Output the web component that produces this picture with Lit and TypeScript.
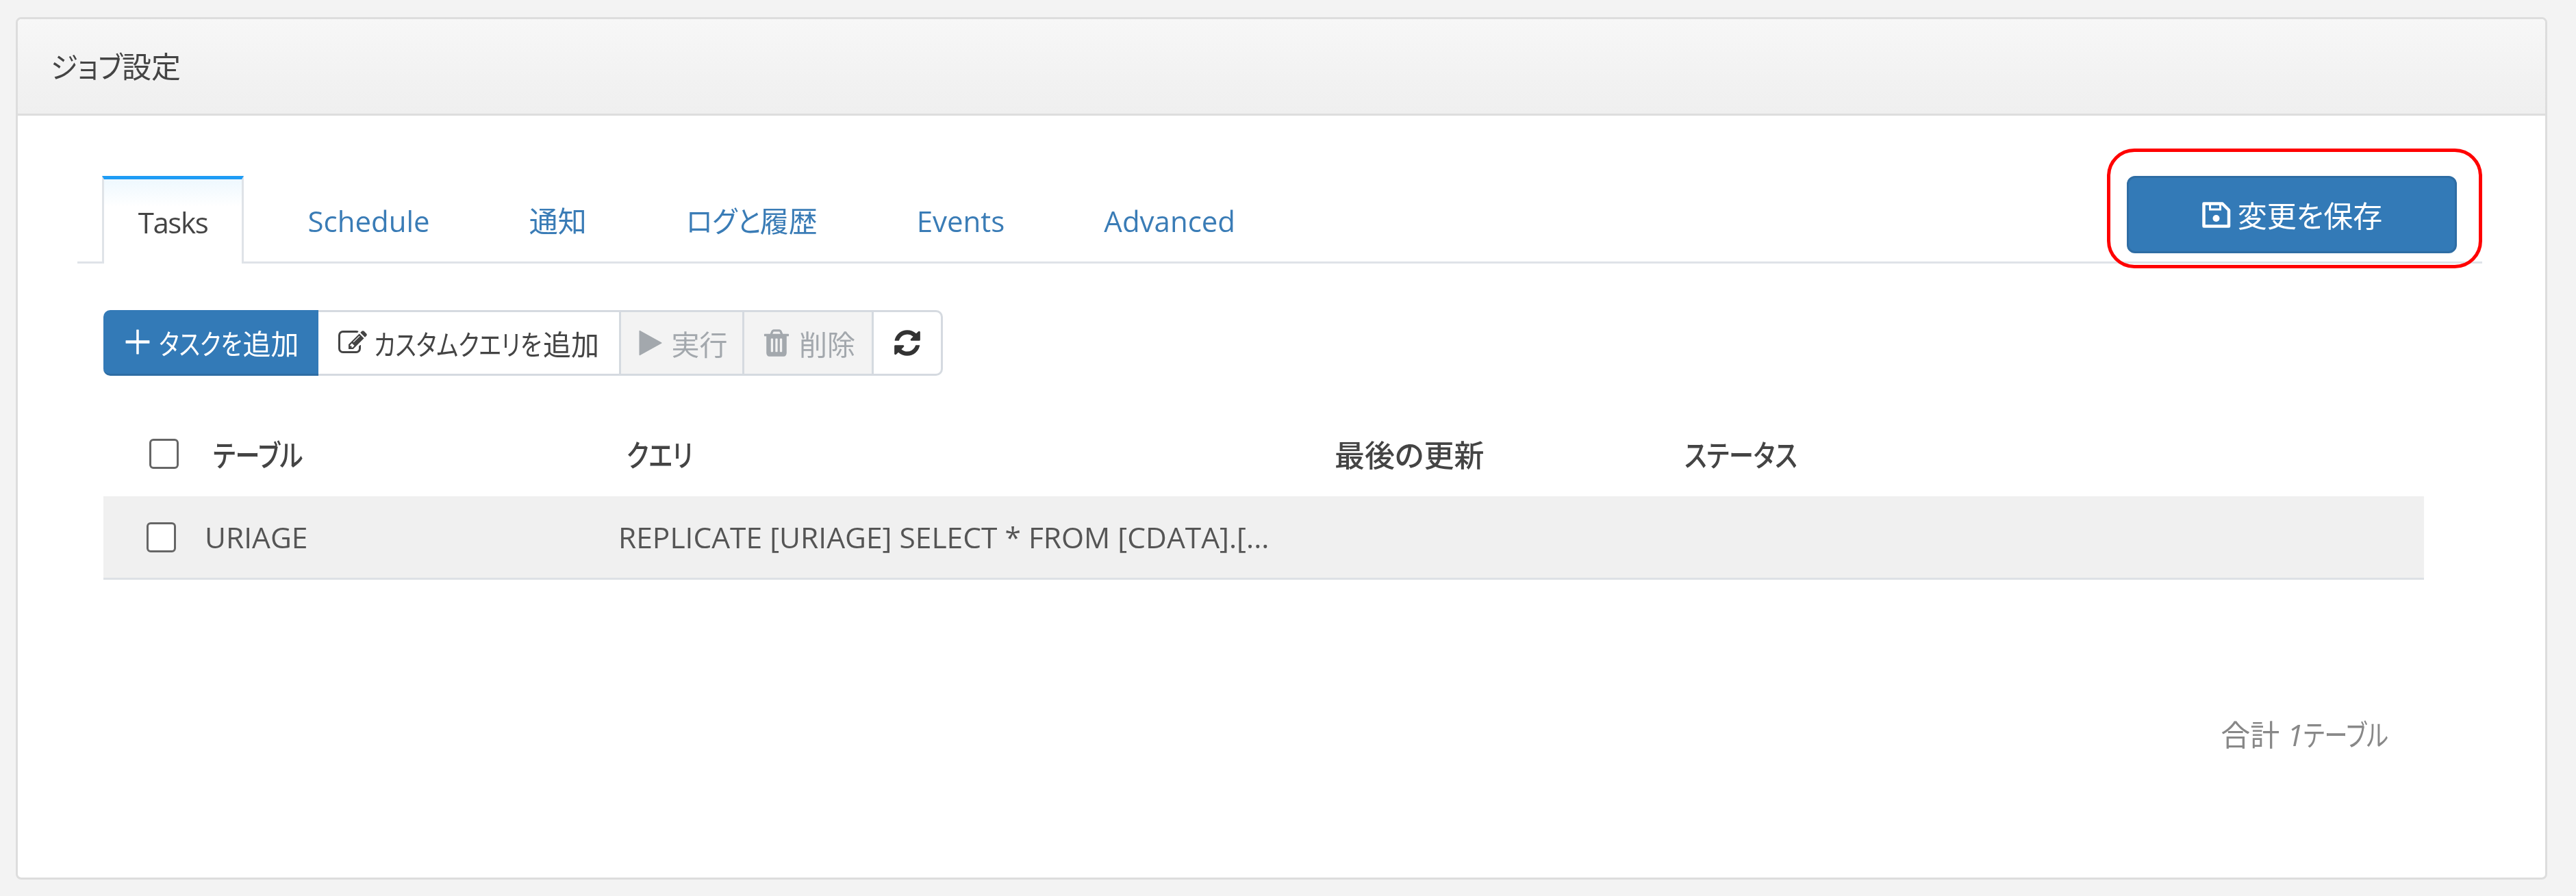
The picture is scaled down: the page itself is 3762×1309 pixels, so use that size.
import { LitElement, html, css } from "lit";
import { customElement } from "lit/decorators.js";

const icon = (d: string, cls = "") => html`<svg class="ic ${cls}" viewBox="0 0 1792 1792" fill="currentColor"><path d=${d}></path></svg>`;
const P = {
  plus: "M1640 800v150q0 20-20 20H970v650q0 20-20 20H840q-20 0-20-20V970H170q-20 0-20-20V800q0-20 20-20h650V130q0-20 20-20h110q20 0 20 20v650h650q20 0 20 20z",
  edit: "M888 1184l116-116-152-152-116 116v56h96v96h56zm440-720q-16-16-33 1l-350 350q-17 17-1 33t33-1l350-350q17-17 1-33zm80 594v190q0 119-84.5 203.5t-203.5 84.5h-832q-119 0-203.5-84.5t-84.5-203.5v-832q0-119 84.5-203.5t203.5-84.5h832q63 0 117 25 15 7 18 23 3 17-9 29l-49 49q-14 14-32 8-23-6-45-6h-832q-66 0-113 47t-47 113v832q0 66 47 113t113 47h832q66 0 113-47t47-113v-126q0-13 9-22l64-64q15-15 35-7t20 29zm-96-738l288 288-672 672h-288v-288zm444 132l-92 92-288-288 92-92q28-28 68-28t68 28l152 152q28 28 28 68t-28 68z",
  play: "M1576 927l-1328 738q-23 13-39.5 3t-16.5-36v-1472q0-26 16.5-36t39.5 3l1328 738q23 13 23 31t-23 31z",
  trash: "M704 1376v-704q0-14-9-23t-23-9h-64q-14 0-23 9t-9 23v704q0 14 9 23t23 9h64q14 0 23-9t9-23zm256 0v-704q0-14-9-23t-23-9h-64q-14 0-23 9t-9 23v704q0 14 9 23t23 9h64q14 0 23-9t9-23zm256 0v-704q0-14-9-23t-23-9h-64q-14 0-23 9t-9 23v704q0 14 9 23t23 9h64q14 0 23-9t9-23zm-544-992h448l-48-117q-7-9-17-11h-317q-10 2-17 11zm928 32v64q0 14-9 23t-23 9h-96v948q0 83-47 143.5t-113 60.5h-832q-66 0-113-58.5t-47-141.5v-952h-96q-14 0-23-9t-9-23v-64q0-14 9-23t23-9h309l70-167q15-37 54-63t79-26h320q40 0 79 26t54 63l70 167h309q14 0 23 9t9 23z",
  refresh: "M1639 1056q0 5-1 7-64 268-268 434.5t-478 166.5q-146 0-282.5-55t-243.5-157l-129 129q-19 19-45 19t-45-19-19-45v-448q0-26 19-45t45-19h448q26 0 45 19t19 45-19 45l-137 137q71 66 161 102t187 36q134 0 250-65t186-179q11-17 53-117 8-23 30-23h192q13 0 22.5 9.5t9.5 22.5zm25-800v448q0 26-19 45t-45 19h-448q-26 0-45-19t-19-45 19-45l138-138q-148-137-349-137-134 0-250 65t-186 179q-11 17-53 117-8 23-30 23h-199q-13 0-22.5-9.5t-9.5-22.5v-7q65-268 270-434.5t480-166.5q146 0 284 55.5t245 156.5l130-129q19-19 45-19t45 19 19 45z",
};

const floppy = html`<svg class="floppy" viewBox="0 0 42 38" fill="none" stroke="currentColor">
  <path d="M3 2.5H30L39.5 12V35.5H3Z" stroke-width="4.5" stroke-linejoin="round"></path>
  <path d="M12 3V11H27V3" stroke-width="3"></path>
  <circle cx="21" cy="24" r="5" fill="currentColor" stroke="none"></circle>
</svg>`;

@customElement("app-root")
export class AppRoot extends LitElement {
  static styles = css`
    :host {
      display: block;
      height: 1309px;
      box-sizing: border-box;
      padding: 25px 42px 24px 23px;
      background: #f3f3f3;
      font-family: "Open Sans", "Noto Sans CJK JP", sans-serif;
      font-feature-settings: "palt";
      font-size: 42px;
      color: #555;
      overflow: hidden;
    }
    * { box-sizing: border-box; }
    .panel {
      position: relative;
      height: 100%;
      background: #fff;
      border: 3px solid #ddd;
      border-radius: 8px;
    }
    .soft { filter: blur(0.7px); }
    /* condensed kana, like the narrow kana of the original UI font */
    .k {
      display: inline-block;
      white-space: nowrap;
      transform-origin: 0 50%;
      transform: scaleX(var(--sx, 0.82));
    }
    .head {
      height: 141px;
      padding: 0 0 4px 48px;
      display: flex;
      align-items: center;
      background: linear-gradient(#f7f7f7, #efefef);
      border-bottom: 3px solid #ddd;
      border-radius: 6px 6px 0 0;
      color: #444;
      font-size: 43px;
    }
    .head .k { --sx: 0.94; width: 104px; }
    .body { padding: 88px 92px 0 87px; }
    .tabbar {
      position: relative;
      display: flex;
      align-items: flex-end;
      height: 128px;
      border-bottom: 3px solid #dfe3e8;
      padding-left: 36px;
    }
    .tab { height: 125px; padding: 37px 72.5px 0; color: #3a7cb6; line-height: 58px; white-space: nowrap; }
    .tab .k { --sx: 0.94; width: 108px; }
    .tab.on {
      width: 207px;
      height: 128px;
      margin-bottom: -3px;
      padding: 34px 0 0;
      margin-right: 21px;
      text-align: center;
      letter-spacing: -1.4px;
      color: #444;
      border: 3px solid #dfe3e8;
      border-top: 5px solid #1e9cf5;
      border-bottom: 0;
      background: linear-gradient(#eef8fe, #fff 40px);
    }
    .save {
      margin-left: auto;
      align-self: flex-start;
      margin-right: 37px;
      width: 482px;
      height: 113px;
      background: #337ab7;
      border: 3px solid #2e6da4;
      border-radius: 12px;
      color: #fff;
      display: flex;
      align-items: center;
      justify-content: center;
      gap: 10px;
      font-size: 43px;
    }
    .floppy { width: 43px; height: 38px; }
    .mark {
      position: absolute;
      left: 3051px;
      top: 189px;
      width: 548px;
      height: 175px;
      border: 5px solid #f00;
      border-radius: 40px;
      pointer-events: none;
    }
    .toolbar {
      display: flex;
      margin: 68px 0 0 38px;
      width: max-content;
      height: 96px;
      font-size: 41px;
    }
    .toolbar .k { --sx: 0.826; }
    .toolbar .w-task { width: 123px; }
    .toolbar .w-custom { width: 247px; }
    .btn {
      display: flex;
      align-items: center;
      gap: 10px;
      border: 3px solid #d5dae0;
      border-left: 0;
      background: #fff;
      color: #444;
      white-space: nowrap;
      justify-content: center;
    }
    .ic { width: 42px; height: 42px; flex: none; }
    .ic.i-trash { width: 46px; height: 46px; }
    .ic.i-refresh { width: 44px; height: 44px; color: #333; }
    .b1 { width: 314px; background: #337ab7; border: 0; border-bottom: 3px solid #2e6da4; border-radius: 10px 0 0 10px; color: #fff; }
    .b2 { width: 442px; }
    .b3 { width: 180px; background: #f3f3f3; color: #a3a8ad; }
    .b4 { width: 189px; background: #f3f3f3; color: #a3a8ad; }
    .b5 { width: 101px; border-radius: 0 10px 10px 0; }
    .table { margin: 0 0 0 38px; width: 3389px; }
    .row { display: grid; grid-template-columns: 764px 1034px 511px 1fr; align-items: center; }
    .th { height: 176px; padding-top: 52px; color: #444; font-weight: 500; font-size: 44px; }
    .tr { height: 122px; background: #f0f0f0; border-bottom: 3px solid #dde1e5; font-size: 42.5px; color: #555; }
    .cell { display: flex; align-items: center; white-space: nowrap; }
    .cb { width: 43px; height: 44px; border: 3px solid #666; border-radius: 6px; background: #fff; flex: none; }
    .th .c0 { padding-left: 67px; gap: 50px; }
    .tr .c0 { padding-left: 63px; gap: 42px; }
    .tr .c1 { margin-left: -12px; }
    .total { margin: 193px 138px 0 0; text-align: right; font-size: 43px; color: #888; }
    .total i { font-style: italic; }
    .total .k { --sx: 0.79; width: 123px; text-align: left; }
  `;

  render() {
    return html`<div class="panel">
      <div class="head soft"><span><span class="k">ジョブ</span>設定</span></div>
      <div class="body soft">
        <div class="tabbar">
          <div class="tab on">Tasks</div>
          <div class="tab">Schedule</div>
          <div class="tab">通知</div>
          <div class="tab"><span class="k">ログと</span>履歴</div>
          <div class="tab">Events</div>
          <div class="tab">Advanced</div>
          <div class="save">${floppy}<span>変更を保存</span></div>
        </div>
        <div class="toolbar">
          <div class="btn b1">${icon(P.plus)}<span><span class="k w-task">タスクを</span>追加</span></div>
          <div class="btn b2">${icon(P.edit)}<span><span class="k w-custom">カスタムクエリを</span>追加</span></div>
          <div class="btn b3">${icon(P.play)}<span>実行</span></div>
          <div class="btn b4">${icon(P.trash, "i-trash")}<span>削除</span></div>
          <div class="btn b5">${icon(P.refresh, "i-refresh")}</div>
        </div>
        <div class="table">
          <div class="row th">
            <div class="cell c0"><span class="cb"></span><span class="k">テーブル</span></div>
            <div class="cell"><span class="k">クエリ</span></div>
            <div class="cell">最後の更新</div>
            <div class="cell"><span class="k">ステータス</span></div>
          </div>
          <div class="row tr">
            <div class="cell c0"><span class="cb"></span><span>URIAGE</span></div>
            <div class="cell c1">REPLICATE [URIAGE] SELECT * FROM [CDATA].[...</div>
            <div class="cell"></div>
            <div class="cell"></div>
          </div>
        </div>
        <div class="total">合計 <i>1</i><span class="k">テーブル</span></div>
      </div>
      <div class="mark"></div>
    </div>`;
  }
}
